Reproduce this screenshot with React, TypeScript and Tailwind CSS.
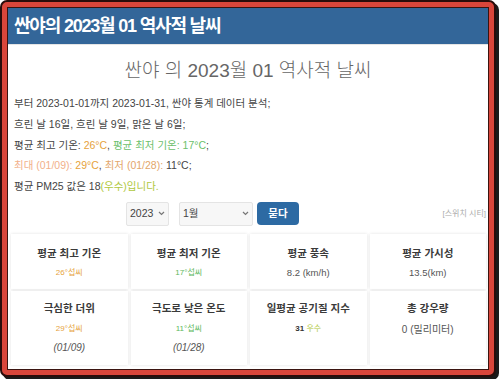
import React from "react";

const font = { fontFamily: '"Liberation Sans", "Noto Sans CJK KR", sans-serif' };

function Chevron() {
  return (
    <svg width="7" height="5" viewBox="0 0 7 5" className="shrink-0">
      <path d="M1 1 L3.5 3.5 L6 1" fill="none" stroke="#777" strokeWidth="1.2" />
    </svg>
  );
}

function Card({ title, children, tall }: { title: string; children: React.ReactNode; tall?: boolean }) {
  return (
    <div
      className={`flex flex-col items-center bg-white shadow-[0_0_3px_rgba(0,0,0,0.12)] ${tall ? "h-[74px] pt-[10px]" : "h-[55px] pt-[12px]"}`}
    >
      <div className="text-[10.5px] font-bold text-[#3a3a3a] leading-[14px]">{title}</div>
      {children}
    </div>
  );
}

export default function App() {
  return (
    <div className="w-[500px] h-[379px] bg-white" style={font}>
      <div className="w-[496px] h-[377px] bg-[#d9463b] border-2 border-[#2a0d0b] rounded-[7px] p-[5px] shadow-[3px_3px_0_#1a1a1a]">
        <div className="w-full h-full border border-[#3a1410] bg-white flex flex-col overflow-hidden">
          <div className="h-[36px] bg-[#336699] flex items-center pl-[6px] shrink-0">
            <span className="text-white font-bold text-[18px] tracking-[-1.2px]">싼야의 2023월 01 역사적 날씨</span>
          </div>
          <div className="h-[1px] bg-[#e5e5e5]" />
          <div className="text-center text-[19px] text-[#666] mt-[13px] leading-[26px]" style={{ fontWeight: 300 }}>
            싼야 의 2023월 01 역사적 날씨
          </div>
          <div className="pl-[6px] mt-[9px] text-[10.5px] text-[#444] leading-[20.8px]">
            <div>부터 2023-01-01까지 2023-01-31, 싼야 통계 데이터 분석;</div>
            <div>흐린 날 16일, 흐린 날 9일, 맑은 날 6일;</div>
            <div>
              평균 최고 기온: <span className="text-[#e6a23c]">26°C</span>,{" "}
              <span className="text-[#6cbf6c]">평균 최저 기온: 17°C</span>;
            </div>
            <div>
              <span className="text-[#f2b08a]">최대 (01/09): </span>
              <span className="text-[#e6a23c]">29°C</span>,{" "}
              <span className="text-[#e3a66a]">최저 (01/28): </span>11°C;
            </div>
            <div>
              평균 PM25 값은 18<span className="text-[#b0c840]">(우수)입니다.</span>
            </div>
          </div>
          <div className="relative flex items-center mt-[5px] h-[24px]">
            <div className="ml-[118px] w-[43px] h-[24px] bg-[#f7f7f7] border border-[#e4e4e4] rounded-[2px] flex items-center justify-between px-[3px] text-[10.5px] text-[#444]">
              <span>2023</span>
              <Chevron />
            </div>
            <div className="ml-[10px] w-[74px] h-[24px] bg-[#f7f7f7] border border-[#e4e4e4] rounded-[2px] flex items-center justify-between px-[3px] text-[10.5px] text-[#444]">
              <span>1월</span>
              <Chevron />
            </div>
            <div className="ml-[4px] w-[42px] h-[23px] bg-[#2d6aa3] rounded-[4px] flex items-center justify-center text-white text-[10.5px] font-bold">
              묻다
            </div>
            <div className="ml-auto mr-[2px] text-[8px] text-[#aaa]">[스위치 시티]</div>
          </div>
          <div className="grid grid-cols-4 gap-x-[3px] gap-y-[2px] ml-[3px] mr-[2px] mt-[8px]">
            <Card title="평균 최고 기온">
              <div className="mt-[7px] text-[8px] text-[#e6a23c]">26°섭씨</div>
            </Card>
            <Card title="평균 최저 기온">
              <div className="mt-[7px] text-[8px] text-[#5cb85c]">17°섭씨</div>
            </Card>
            <Card title="평균 풍속">
              <div className="mt-[6px] text-[9.5px] text-[#555]">8.2 (km/h)</div>
            </Card>
            <Card title="평균 가시성">
              <div className="mt-[6px] text-[9.5px] text-[#555]">13.5(km)</div>
            </Card>
            <Card title="극심한 더위" tall>
              <div className="mt-[8px] text-[8px] text-[#e6a23c]">29°섭씨</div>
              <div className="mt-[5px] text-[10px] italic text-[#555]">(01/09)</div>
            </Card>
            <Card title="극도로 낮은 온도" tall>
              <div className="mt-[8px] text-[8px] text-[#5cb85c]">11°섭씨</div>
              <div className="mt-[5px] text-[10px] italic text-[#555]">(01/28)</div>
            </Card>
            <Card title="일평균 공기질 지수" tall>
              <div className="mt-[8px] text-[8px] text-[#333]">
                <span className="font-bold">31</span> <span className="text-[#b0c840]">우수</span>
              </div>
            </Card>
            <Card title="총 강우량" tall>
              <div className="mt-[7px] text-[10px] text-[#555]">0 (밀리미터)</div>
            </Card>
          </div>
        </div>
      </div>
    </div>
  );
}
